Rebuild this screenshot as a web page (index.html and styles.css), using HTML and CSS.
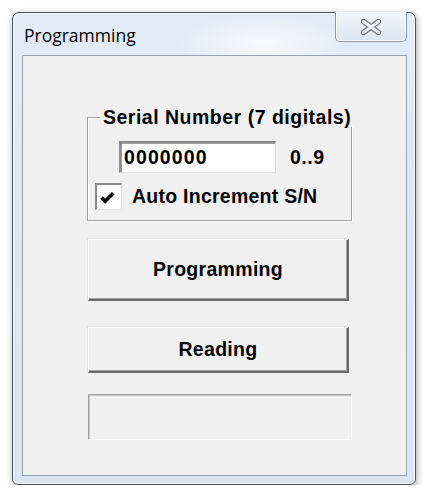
FILE: index.html
```html
<!DOCTYPE html>
<html>
<head>
<meta charset="utf-8">
<link rel="stylesheet" href="styles.css">
</head>
<body>
<div class="window">
  <div class="titlebar">
    <span class="title">Programming</span>
    <button class="close" aria-label="Close">
      <svg width="24" height="18" viewBox="0 0 24 18">
        <path d="M4.5 3.5 L19.5 14.5 M19.5 3.5 L4.5 14.5" stroke="#6e7782" stroke-width="5.4" stroke-linecap="round" fill="none"/>
        <path d="M4.5 3.5 L19.5 14.5 M19.5 3.5 L4.5 14.5" stroke="#eef1f5" stroke-width="3.2" stroke-linecap="round" fill="none"/>
      </svg>
    </button>
  </div>
  <div class="client">
    <fieldset class="group">
      <legend class="legend">Serial Number (7 digitals)</legend>
      <div class="row-edit">
        <div class="edit">0000000</div>
        <span class="range">0..9</span>
      </div>
      <label class="row-check">
        <span class="checkbox">
          <svg width="15" height="13" viewBox="0 0 15 13">
            <path d="M1.5 6.5 L5.2 10.2 L13.2 2.2" stroke="#000" stroke-width="3.6" fill="none"/>
          </svg>
        </span>
        <span class="check-label">Auto Increment S/N</span>
      </label>
    </fieldset>
    <button class="btn btn-prog">Programming</button>
    <button class="btn btn-read">Reading</button>
    <div class="status"></div>
  </div>
</div>
</body>
</html>
```

FILE: styles.css
```css
html, body {
  margin: 0;
  padding: 0;
  background: #ffffff;
}

.window {
  box-sizing: border-box;
  margin: 12px 0 0 12px;
  width: 404px;
  height: 473px;
  border: 1px solid #4d5661;
  border-radius: 7px 7px 6px 6px;
  padding: 0 8px 8px 9px;
  background:
    radial-gradient(ellipse 120px 40px at 250px 30px, rgba(255,255,255,0.75), rgba(255,255,255,0) 70%),
    linear-gradient(180deg, #e3edf8 0%, #dbe7f4 50%, #d9e5f2 100%);
  box-shadow: 1px 2px 7px rgba(0,0,0,0.35), inset 0 0 0 1px rgba(255,255,255,0.7);
  display: flex;
  flex-direction: column;
}

.titlebar {
  height: 42px;
  display: flex;
  align-items: flex-start;
  padding-left: 2px;
}

.title {
  font-family: "Open Sans", "Noto Sans", sans-serif;
  font-size: 17.5px;
  line-height: 22px;
  color: #000;
  margin-top: 11px;
}

.close {
  margin-left: auto;
  margin-top: -1px;
  width: 72px;
  height: 30px;
  box-sizing: border-box;
  border: 1px solid #8c97a4;
  border-top: none;
  border-radius: 0 0 5px 5px;
  background: linear-gradient(180deg, #f2f6fb 0%, #e6eef7 50%, #dbe6f2 100%);
  box-shadow: inset 0 0 0 1px rgba(255,255,255,0.8);
  padding: 0;
  display: flex;
  align-items: center;
  justify-content: center;
}

.close svg {
  display: block;
  margin-top: 1px;
}

.client {
  flex: 1;
  box-sizing: border-box;
  border: 1px solid #97a3b1;
  background: #f0f0f0;
  display: flex;
  flex-direction: column;
  align-items: flex-start;
  padding-left: 64px;
  font-family: "Liberation Sans", Arial, sans-serif;
  font-weight: bold;
  font-size: 19.5px;
  color: #000;
}

.group {
  margin: 51px 0 0 0;
  width: 265px;
  box-sizing: border-box;
  padding: 14px 0 10px 0;
  border: 1px solid #a0a0a0;
  box-shadow: inset 1px 1px 0 #ffffff, 1px 1px 0 #ffffff;
  min-inline-size: 0;
}

.legend {
  margin-left: 12px;
  padding: 0 2px 0 3px;
  line-height: 20px;
  background: #f0f0f0;
  letter-spacing: 0.5px;
  white-space: nowrap;
}

.row-edit {
  display: flex;
  align-items: center;
  padding-left: 31px;
  height: 32px;
}

.edit {
  box-sizing: border-box;
  width: 157px;
  height: 32px;
  background: #fff;
  border-top: 2px solid #8a8a8a;
  border-left: 2px solid #8a8a8a;
  border-bottom: 1px solid #e3e3e3;
  border-right: 1px solid #e3e3e3;
  box-shadow: inset 1px 1px 0 #a0a0a0;
  padding-left: 3px;
  line-height: 29px;
  letter-spacing: 1.1px;
}

.range {
  margin-left: 14px;
  letter-spacing: 0.5px;
}

.row-check {
  display: flex;
  align-items: center;
  margin-top: 10px;
  padding-left: 7px;
  height: 27px;
}

.checkbox {
  box-sizing: border-box;
  width: 27px;
  height: 27px;
  background: #fff;
  border-top: 2px solid #8a8a8a;
  border-left: 2px solid #8a8a8a;
  border-bottom: 1px solid #e3e3e3;
  border-right: 1px solid #e3e3e3;
  display: flex;
  align-items: center;
  justify-content: center;
}

.checkbox svg {
  display: block;
  margin: 0 3px 0 0;
}

.check-label {
  margin-left: 10px;
  letter-spacing: 0.25px;
}

.btn {
  box-sizing: border-box;
  margin-left: 1px;
  width: 261px;
  font: inherit;
  color: #000;
  background: #f0f0f0;
  border-top: 1px solid #ffffff;
  border-left: 1px solid #ffffff;
  border-right: 2px solid #6b6b6b;
  border-bottom: 2px solid #6b6b6b;
  box-shadow: inset -1px -1px 0 #a0a0a0, -1px -1px 0 #e3e3e3;
  padding: 0;
  letter-spacing: 0.3px;
}

.btn-prog {
  margin-top: 18px;
  height: 62px;
}

.btn-read {
  margin-top: 26px;
  height: 46px;
}

.status {
  box-sizing: border-box;
  margin: 21px 0 0 1px;
  width: 264px;
  height: 46px;
  border-top: 1px solid #a0a0a0;
  border-left: 1px solid #a0a0a0;
  border-right: 1px solid #ffffff;
  border-bottom: 1px solid #ffffff;
  box-shadow: inset 1px 1px 0 #c8c8c8;
}
```
